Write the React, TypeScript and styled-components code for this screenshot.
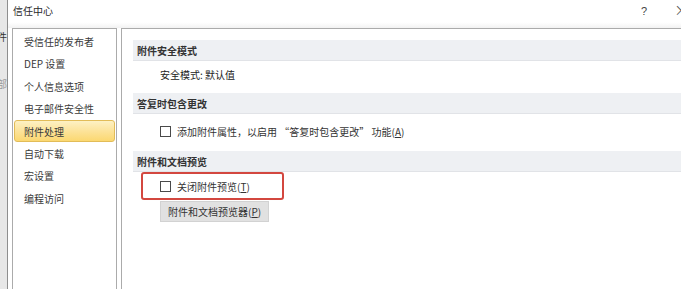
import styled, { createGlobalStyle } from "styled-components";

// Trust Center dialog, "attachment handling" page

const GlobalStyle = createGlobalStyle`
  html, body {
    margin: 0;
    padding: 0;
    background: #ffffff;
  }
  body {
    font-family: "Noto Sans CJK SC", "Noto Sans", "Liberation Sans", sans-serif;
    font-size: 10px;
    color: #353535;
  }
`;

const Screen = styled.div`
  display: flex;
  width: 681px;
  height: 289px;
  overflow: hidden;
`;

// sliver of the window behind the dialog
const BackWindow = styled.div`
  flex: none;
  width: 7px;
  background: #e7e7e7;
  border-right: 1px solid #8e8e8e;
  overflow: hidden;
  display: flex;
  flex-direction: column;
  align-items: flex-end;
`;

const BackText = styled.div<{ $top: number; $faint?: boolean }>`
  margin-top: ${({ $top }) => $top}px;
  white-space: nowrap;
  line-height: 12px;
  color: ${({ $faint }) => ($faint ? "#9a9a9a" : "#333")};
`;

const Dialog = styled.div`
  flex: 1;
  display: flex;
  flex-direction: column;
  background: #ffffff;
  min-width: 0;
`;

const TitleBar = styled.div`
  height: 28px;
  box-sizing: border-box;
  display: flex;
  align-items: flex-start;
  padding: 3px 0 0 5px;
  background: linear-gradient(#ffffff 0, #ffffff 80%, #f2f2f2 100%);
`;

const Title = styled.span`
  line-height: 16px;
  color: #2b2b2b;
`;

const Spacer = styled.div`
  flex: 1;
`;

const HelpButton = styled.span`
  width: 30px;
  flex: none;
  text-align: center;
  line-height: 16px;
  font-family: "Liberation Sans", sans-serif;
  font-size: 11px;
  color: #444;
`;

// close button sits half outside the captured area
const CloseButton = styled.span`
  width: 30px;
  flex: none;
  text-align: center;
  line-height: 16px;
  margin: -1px -15px 0 7px;
  font-family: "DejaVu Sans", sans-serif;
  font-weight: 200;
  font-size: 17px;
  color: #555;
`;

const Body = styled.div`
  flex: 1;
  display: flex;
  gap: 4px;
  padding-left: 4px;
  min-height: 0;
`;

const Nav = styled.nav`
  width: 105px;
  flex: none;
  box-sizing: border-box;
  border: 1px solid #ababab;
  border-bottom: none;
  padding-top: 1.4px;
  background: #ffffff;
`;

const NavItem = styled.div<{ $active?: boolean }>`
  height: 22.4px;
  box-sizing: border-box;
  margin: 0 1px;
  padding-left: 9px;
  display: flex;
  align-items: center;
  border: 1px solid ${({ $active }) => ($active ? "#e2bc58" : "transparent")};
  border-radius: 3px;
  color: #3a3a3a;
  background: ${({ $active }) =>
    $active ? "linear-gradient(#fdf1c4 0%, #fce39a 50%, #fbd871 100%)" : "transparent"};
`;

const Content = styled.main`
  flex: 1;
  min-width: 0;
  border-left: 1px solid #ababab;
  border-top: 1px solid #ababab;
  padding: 11px 0 0 11px;
  display: flex;
  flex-direction: column;
  align-items: flex-start;
`;

const SectionHeader = styled.div`
  align-self: stretch;
  height: 21px;
  box-sizing: border-box;
  background: #eef0f3;
  border-bottom: 1px solid #e1e3e7;
  padding-left: 4px;
  display: flex;
  align-items: center;
  font-weight: bold;
  color: #333;
`;

const InfoRow = styled.div`
  padding: 6px 0 10px 27px;
  line-height: 16px;
  color: #222;
`;

const CheckRow = styled.label<{ $top: number; $bottom: number }>`
  display: flex;
  align-items: center;
  height: 16px;
  margin: ${({ $top, $bottom }) => `${$top}px 0 ${$bottom}px 27px`};
  color: #333;
`;

const Highlight = styled.div`
  width: 143px;
  height: 28px;
  box-sizing: border-box;
  margin-left: 8px;
  border: 2px solid #d3473f;
  border-radius: 3px;
  padding-left: 17px;
  display: flex;
  align-items: center;
  color: #333;
`;

const Box = styled.span`
  width: 11px;
  height: 11px;
  box-sizing: border-box;
  border: 1px solid #4a4a4a;
  background: #ffffff;
  margin-right: 6px;
  flex: none;
`;

const Button = styled.button`
  margin: 1px 0 0 27px;
  height: 21px;
  padding: 0 7px;
  background: #e1e1e1;
  border: 1px solid #d2d2d2;
  font-family: inherit;
  font-size: 10px;
  color: #333;
`;

const navItems = [
  "受信任的发布者",
  "DEP 设置",
  "个人信息选项",
  "电子邮件安全性",
  "附件处理",
  "自动下载",
  "宏设置",
  "编程访问",
];

export default function App() {
  return (
    <>
      <GlobalStyle />
      <Screen>
        <BackWindow>
          <BackText $top={31}>附件</BackText>
          <BackText $top={35} $faint>
            全部
          </BackText>
        </BackWindow>

        <Dialog>
          <TitleBar>
            <Title>信任中心</Title>
            <Spacer />
            <HelpButton>?</HelpButton>
            <CloseButton>×</CloseButton>
          </TitleBar>

          <Body>
            <Nav>
              {navItems.map((item, idx) => (
                <NavItem key={item} $active={idx === 4}>
                  {item}
                </NavItem>
              ))}
            </Nav>

            <Content>
              <SectionHeader>附件安全模式</SectionHeader>
              <InfoRow>安全模式: 默认值</InfoRow>

              <SectionHeader>答复时包含更改</SectionHeader>
              <CheckRow $top={9} $bottom={12}>
                <Box />
                添加附件属性，以启用 “答复时包含更改” 功能(<u>A</u>)
              </CheckRow>

              <SectionHeader>附件和文档预览</SectionHeader>
              <Highlight>
                <Box />
                关闭附件预览(<u>T</u>)
              </Highlight>
              <Button>
                附件和文档预览器(<u>P</u>)
              </Button>
            </Content>
          </Body>
        </Dialog>
      </Screen>
    </>
  );
}
